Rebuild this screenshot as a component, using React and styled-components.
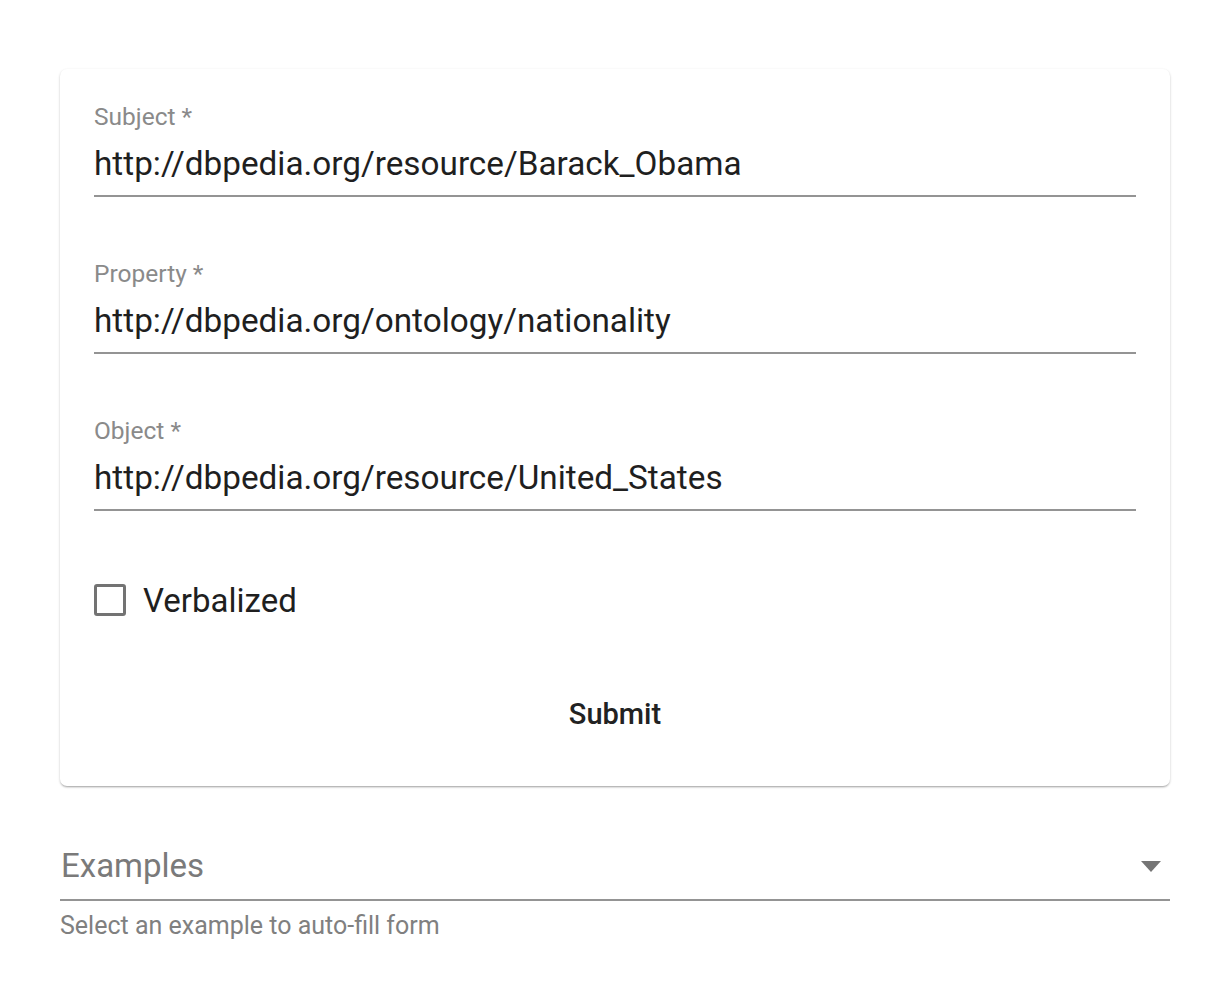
import React from "react";
import styled, { createGlobalStyle } from "styled-components";

const GlobalStyle = createGlobalStyle`
  body {
    margin: 0;
    background: #fff;
    font-family: Roboto, "Helvetica Neue", Arial, sans-serif;
  }
`;

const Page = styled.div`
  padding: 69px 60px 40px 60px;
`;

const Card = styled.div`
  background: #fff;
  border-radius: 7px;
  box-shadow: 0 2px 2px -1px rgba(0, 0, 0, 0.2), 0 1px 3px 0 rgba(0, 0, 0, 0.12),
    0 1px 2px 0 rgba(0, 0, 0, 0.1);
  padding: 34px 34px 50px 34px;
  display: flex;
  flex-direction: column;
`;

const Field = styled.div`
  display: flex;
  flex-direction: column;
  margin-bottom: 63px;
`;

const Label = styled.label`
  font-size: 24.5px;
  color: #8a8a8a;
  line-height: 28px;
`;

const Value = styled.div`
  font-size: 33.3px;
  color: #1f1f1f;
  line-height: 40px;
  padding: 13px 0 11px 0;
  border-bottom: 2px solid #949494;
`;

const CheckRow = styled.label`
  display: flex;
  align-items: center;
  gap: 17px;
  height: 52px;
  font-size: 33px;
  color: #1f1f1f;
`;

const Box = styled.span`
  width: 26px;
  height: 26px;
  border: 3px solid #737373;
  border-radius: 3px;
`;

const Actions = styled.div`
  display: flex;
  justify-content: center;
  margin-top: 66px;
`;

const Button = styled.button`
  background: none;
  border: none;
  font-family: inherit;
  font-size: 29px;
  line-height: 36px;
  font-weight: 500;
  color: #222;
  padding: 4px 12px;
  cursor: pointer;
`;

const Select = styled.div`
  margin-top: 52px;
  display: flex;
  align-items: center;
  justify-content: space-between;
  border-bottom: 2px solid #949494;
  padding: 8px 9px 13px 1px;
`;

const Placeholder = styled.span`
  font-size: 33px;
  color: #7a7a7a;
  line-height: 40px;
`;

const Helper = styled.div`
  margin-top: 10px;
  font-size: 25px;
  line-height: 30px;
  color: #808080;
`;

const fields = [
  { label: "Subject *", value: "http://dbpedia.org/resource/Barack_Obama" },
  { label: "Property *", value: "http://dbpedia.org/ontology/nationality" },
  { label: "Object *", value: "http://dbpedia.org/resource/United_States" },
];

export default function App() {
  return (
    <Page>
      <GlobalStyle />
      <Card>
        {fields.map((f) => (
          <Field key={f.label}>
            <Label>{f.label}</Label>
            <Value>{f.value}</Value>
          </Field>
        ))}
        <CheckRow>
          <Box />
          Verbalized
        </CheckRow>
        <Actions>
          <Button>Submit</Button>
        </Actions>
      </Card>
      <Select>
        <Placeholder>Examples</Placeholder>
        <svg width="20" height="11" viewBox="0 0 20 11">
          <path d="M0 0 L20 0 L10 11 Z" fill="#757575" />
        </svg>
      </Select>
      <Helper>Select an example to auto-fill form</Helper>
    </Page>
  );
}
